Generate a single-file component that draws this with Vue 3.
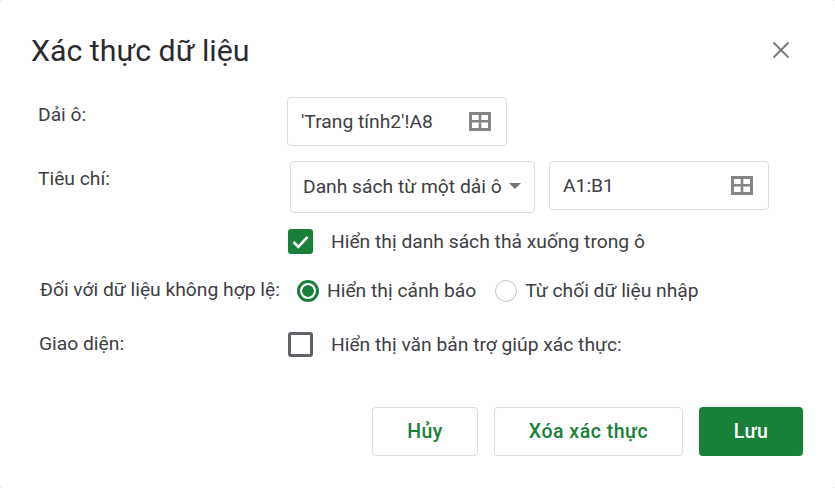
<template>
  <div class="dialog">
    <div class="title-bar">
      <h1>Xác thực dữ liệu</h1>
      <svg class="close" width="18" height="18" viewBox="0 0 18 18">
        <path d="M1.500 1.500 16.500 16.500M16.500 1.500 1.500 16.500" stroke="#777" stroke-width="1.800" fill="none" />
      </svg>
    </div>

    <div class="row range-row">
      <div class="label">Dải ô:</div>
      <div class="field range-field">
        <span>'Trang tính2'!A8</span>
        <svg class="grid-icon" width="22" height="19" viewBox="0 0 22 19">
          <path fill="#858585" fill-rule="evenodd" d="M0 0h22v19H0zM3 3v5h6.700V3zM12.300 3v5h6.700V3zM3 10.500v5.500h6.700v-5.500zM12.300 10.500v5.500h6.700v-5.500z" />
        </svg>
      </div>
    </div>

    <div class="row criteria-row">
      <div class="label">Tiêu chí:</div>
      <div class="field select">
        <span>Danh sách từ một dải ô</span>
        <i class="caret"></i>
      </div>
      <div class="field criteria-field">
        <span>A1:B1</span>
        <svg class="grid-icon" width="22" height="19" viewBox="0 0 22 19">
          <path fill="#858585" fill-rule="evenodd" d="M0 0h22v19H0zM3 3v5h6.700V3zM12.300 3v5h6.700V3zM3 10.500v5.500h6.700v-5.500zM12.300 10.500v5.500h6.700v-5.500z" />
        </svg>
      </div>
    </div>

    <div class="row check-row">
      <div class="check checked">
        <svg width="25" height="25" viewBox="0 0 25 25">
          <path d="M5.500 13 10.300 17.800 19.500 8" stroke="#fff" stroke-width="2.600" fill="none" />
        </svg>
      </div>
      <span class="check-text">Hiển thị danh sách thả xuống trong ô</span>
    </div>

    <div class="row invalid-row">
      <div class="label">Đối với dữ liệu không hợp lệ:</div>
      <div class="radio on"></div>
      <span class="radio-text">Hiển thị cảnh báo</span>
      <div class="radio"></div>
      <span class="radio-text">Từ chối dữ liệu nhập</span>
    </div>

    <div class="row look-row">
      <div class="label">Giao diện:</div>
      <div class="check"></div>
      <span class="check-text">Hiển thị văn bản trợ giúp xác thực:</span>
    </div>

    <div class="actions">
      <button class="btn cancel">Hủy</button>
      <button class="btn clear">Xóa xác thực</button>
      <button class="btn save">Lưu</button>
    </div>
  </div>
</template>

<script setup>
</script>

<style>
html,
body {
  margin: 0;
  background: #e6e6e6;
}
</style>

<style scoped>
.dialog {
  width: 835px;
  height: 488px;
  box-sizing: border-box;
  background: #fff;
  border-radius: 3px;
  color: #3c4043;
  font-family: Roboto, "Noto Sans", sans-serif;
  font-size: 19.25px;
  overflow: hidden;
}

.title-bar {
  display: flex;
  justify-content: space-between;
  align-items: center;
  height: 38px;
  padding: 31px 45px 0 31px;
}

h1 {
  margin: 0;
  font-size: 30.3px;
  font-weight: 400;
  color: #2a2b2e;
}

.close {
  margin-top: -1px;
}

.row {
  display: flex;
  align-items: flex-start;
  padding-left: 38px;
}

.label {
  width: 249px;
  flex: none;
}

.field {
  display: flex;
  align-items: center;
  justify-content: space-between;
  box-sizing: border-box;
  height: 49px;
  border: 1px solid #dadce0;
  border-radius: 4px;
  padding: 0 15px 0 13px;
}

.range-row {
  margin-top: 28px;
}

.range-row .label {
  padding-top: 6px;
}

.range-field {
  width: 220px;
}

.criteria-row {
  margin-top: 15px;
}

.criteria-row .label {
  width: 252px;
  padding-top: 6px;
}

.select {
  width: 245px;
  height: 52px;
  padding: 0 14px 2px 12px;
}

.caret {
  width: 0;
  height: 0;
  border-left: 6px solid transparent;
  border-right: 6px solid transparent;
  border-top: 6px solid #757575;
  margin-right: -1px;
}

.criteria-field {
  width: 220px;
  margin-left: 14px;
}

.check {
  box-sizing: border-box;
  flex: none;
  width: 25px;
  height: 25px;
  border: 3px solid #5f6368;
  border-radius: 3px;
}

.check.checked {
  border: 0;
  background: #188038;
}

.check svg {
  display: block;
}

.check-text {
  margin-left: 18px;
}

.check-row {
  margin-top: 16px;
  padding-left: 288px;
  align-items: center;
}

.invalid-row {
  margin-top: 25px;
  padding-left: 40px;
  align-items: center;
}

.invalid-row .label {
  width: 257px;
  margin-top: -3px;
}

.radio {
  box-sizing: border-box;
  flex: none;
  width: 22px;
  height: 22px;
  border: 1px solid #c4c7c5;
  border-radius: 50%;
}

.radio.on {
  border: 3px solid #188038;
  background: radial-gradient(circle, #188038 0 5.500px, #fff 6px);
}

.radio-text {
  margin-left: 8px;
  margin-right: 19px;
}

.look-row {
  margin-top: 30px;
  padding-left: 39px;
  align-items: center;
}

.look-row .label {
  margin-top: -2px;
}

.actions {
  display: flex;
  justify-content: flex-end;
  gap: 16px;
  margin-top: 50px;
  padding-right: 32px;
}

.btn {
  box-sizing: border-box;
  height: 49px;
  border: 1px solid #dadce0;
  border-radius: 4px;
  background: #fff;
  color: #188038;
  font-family: Roboto, "Noto Sans", sans-serif;
  font-size: 19.5px;
  font-weight: 500;
  letter-spacing: 0.5px;
  padding: 0;
}

.cancel {
  width: 106px;
}

.clear {
  width: 189px;
}

.save {
  width: 104px;
  border: 0;
  background: #188038;
  color: #fff;
}
</style>
